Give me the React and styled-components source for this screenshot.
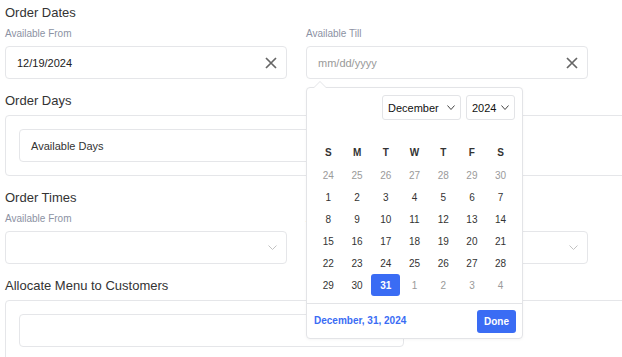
import styled, { createGlobalStyle } from "styled-components";

const GlobalStyle = createGlobalStyle`
  html, body {
    margin: 0;
    padding: 0;
    background: #fff;
    overflow: hidden;
  }
  body {
    font-family: "Liberation Sans", Arial, sans-serif;
    color: #333;
  }
  * {
    box-sizing: border-box;
  }
`;

const Page = styled.div`
  padding: 5px 0 0 5px;
  width: 700px;
`;

const Section = styled.section`
  margin-bottom: 14px;
`;

const Heading = styled.h3`
  margin: 0 0 ${(props) => (props.$tight ? "6px" : "7px")};
  font-size: 13px;
  line-height: 16px;
  font-weight: 400;
  color: #333;
`;

const FieldGrid = styled.div`
  display: grid;
  grid-template-columns: 282px 282px;
  column-gap: 19px;
`;

const Field = styled.div`
  position: relative;
`;

const Label = styled.div`
  font-size: 10px;
  line-height: 12px;
  color: #8c92a3;
  margin-bottom: 6px;
`;

const InputBox = styled.div`
  position: relative;
  display: flex;
  align-items: center;
  justify-content: space-between;
  height: 33px;
  padding: 0 9px 0 11px;
  border: 1px solid #e5e6e9;
  border-radius: 4px;
  background: #fff;
  font-size: 11px;
  color: ${(props) => (props.$placeholder ? "#999" : "#222")};
`;

const Panel = styled.div`
  width: 690px;
  padding: 13px;
  border: 1px solid #e5e6e9;
  border-radius: 4px;
`;

const InnerBox = styled.div`
  width: 385px;
  height: 33px;
  display: flex;
  align-items: center;
  padding-left: 11px;
  border: 1px solid #e5e6e9;
  border-radius: 4px;
  font-size: 11px;
  color: #333;
`;

const Popover = styled.div`
  position: absolute;
  top: calc(100% + 9px);
  left: -1px;
  z-index: 10;
  width: 217px;
  background: #fff;
  border: 1px solid #e3e4e7;
  border-radius: 4px;
  box-shadow: 0 1px 3px rgba(0, 0, 0, 0.04);

  &::before,
  &::after {
    content: "";
    position: absolute;
    left: 7px;
    width: 0;
    height: 0;
    border-left: 6px solid transparent;
    border-right: 6px solid transparent;
  }
  &::before {
    top: -7px;
    border-bottom: 6px solid #e3e4e7;
  }
  &::after {
    top: -6px;
    border-bottom: 6px solid #fff;
  }
`;

const PickerHead = styled.div`
  display: flex;
  justify-content: flex-end;
  gap: 5px;
  padding: 7px 7px 0;
  margin-bottom: 22px;
`;

const SelectBox = styled.div`
  display: flex;
  align-items: center;
  justify-content: space-between;
  width: ${(props) => props.$width}px;
  height: 25px;
  padding: 0 5px;
  border: 1px solid #e3e4e7;
  border-radius: 3px;
  font-size: 11px;
  color: #111;
`;

const DayGrid = styled.div`
  display: grid;
  grid-template-columns: repeat(7, 1fr);
  grid-auto-rows: 22px;
  padding: 0 7px;
  margin-bottom: 7px;
`;

const WeekDay = styled.div`
  display: flex;
  align-items: center;
  justify-content: center;
  height: 20px;
  font-size: 10px;
  font-weight: 700;
  color: #333;
`;

const Day = styled.div`
  display: flex;
  align-items: center;
  justify-content: center;
  font-size: 10px;
  border-radius: 3px;
  color: ${(props) => (props.$selected ? "#fff" : props.$muted ? "#9a9a9a" : "#333")};
  background: ${(props) => (props.$selected ? "#3a6cf4" : "transparent")};
  font-weight: ${(props) => (props.$selected ? 700 : 400)};
`;

const PickerFoot = styled.div`
  display: flex;
  align-items: center;
  justify-content: space-between;
  border-top: 1px solid #e3e4e7;
  padding: 6px 6px 5px 7px;
`;

const PickedDate = styled.span`
  font-size: 10px;
  font-weight: 700;
  color: #3a6cf4;
  margin-bottom: 3px;
`;

const DoneButton = styled.button`
  width: 39px;
  height: 23px;
  border: none;
  border-radius: 3px;
  background: #3a6cf4;
  color: #fff;
  font-family: inherit;
  font-size: 10px;
  font-weight: 700;
  padding: 0;
`;

function ClearIcon() {
  return (
    <svg width="12" height="12" viewBox="0 0 12 12">
      <path d="M1 1L11 11M11 1L1 11" stroke="#666" strokeWidth="1.7" />
    </svg>
  );
}

function Chevron({ color = "#c2c2c2", w = 9, h = 5 }) {
  return (
    <svg width={w} height={h} viewBox={`0 0 ${w} ${h}`}>
      <path
        d={`M0.5 0.5L${w / 2} ${h - 0.5}L${w - 0.5} 0.5`}
        fill="none"
        stroke={color}
        strokeWidth="1"
      />
    </svg>
  );
}

const weekDays = ["S", "M", "T", "W", "T", "F", "S"];

function buildDays() {
  const days = [];
  for (let d = 24; d <= 30; d++) days.push({ d, muted: true });
  for (let d = 1; d <= 31; d++) days.push({ d });
  for (let d = 1; d <= 4; d++) days.push({ d, muted: true });
  return days;
}

function DatePicker() {
  return (
    <Popover>
      <PickerHead>
        <SelectBox $width={79}>
          December
          <Chevron color="#444" w={8} h={5} />
        </SelectBox>
        <SelectBox $width={49}>
          2024
          <Chevron color="#444" w={8} h={5} />
        </SelectBox>
      </PickerHead>
      <DayGrid>
        {weekDays.map((w, i) => (
          <WeekDay key={i}>{w}</WeekDay>
        ))}
        {buildDays().map((day, i) => (
          <Day key={i} $muted={day.muted} $selected={!day.muted && day.d === 31}>
            {day.d}
          </Day>
        ))}
      </DayGrid>
      <PickerFoot>
        <PickedDate>December, 31, 2024</PickedDate>
        <DoneButton>Done</DoneButton>
      </PickerFoot>
    </Popover>
  );
}

export default function App() {
  return (
    <>
      <GlobalStyle />
      <Page>
        <Section>
          <Heading>Order Dates</Heading>
          <FieldGrid>
            <Field>
              <Label>Available From</Label>
              <InputBox>
                12/19/2024
                <ClearIcon />
              </InputBox>
            </Field>
            <Field>
              <Label>Available Till</Label>
              <InputBox $placeholder>
                mm/dd/yyyy
                <ClearIcon />
                <DatePicker />
              </InputBox>
            </Field>
          </FieldGrid>
        </Section>

        <Section>
          <Heading $tight>Order Days</Heading>
          <Panel>
            <InnerBox>Available Days</InnerBox>
          </Panel>
        </Section>

        <Section>
          <Heading>Order Times</Heading>
          <FieldGrid>
            <Field>
              <Label>Available From</Label>
              <InputBox>
                <span />
                <Chevron />
              </InputBox>
            </Field>
            <Field>
              <Label>Available Till</Label>
              <InputBox>
                <span />
                <Chevron />
              </InputBox>
            </Field>
          </FieldGrid>
        </Section>

        <Section>
          <Heading $tight>Allocate Menu to Customers</Heading>
          <Panel>
            <InnerBox />
          </Panel>
        </Section>
      </Page>
    </>
  );
}
